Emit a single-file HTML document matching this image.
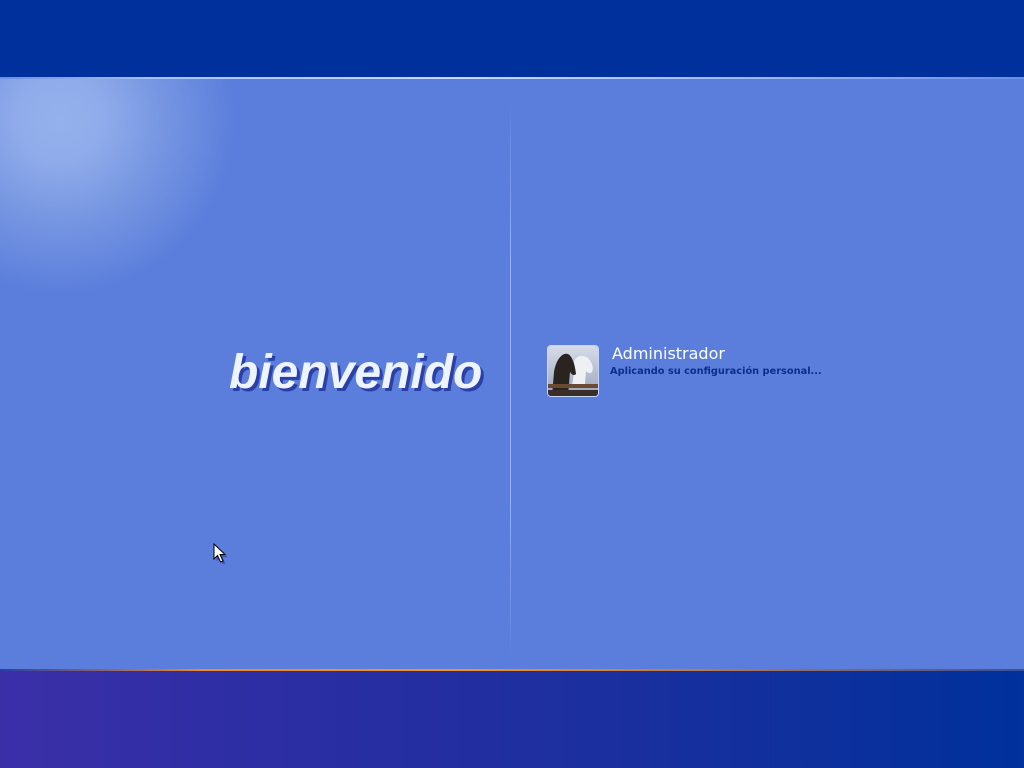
<!DOCTYPE html>
<html><head><meta charset="utf-8"><style>
html,body{margin:0;padding:0;width:1024px;height:768px;overflow:hidden;background:#5b7edc;position:relative;font-family:"Liberation Sans",sans-serif}
.top{position:absolute;left:0;top:0;width:1024px;height:77px;background:#00309c}
.tl{position:absolute;left:0;top:77px;width:1024px;height:2px;background:linear-gradient(90deg,#6a8ee0 0%,#a8c0f4 15%,#c8d8fa 45%,#8aa8ec 85%,#6a8ee0 100%)}
.mid{position:absolute;left:0;top:79px;width:1024px;height:590px;overflow:hidden;background:radial-gradient(circle 175px at 60px 40px,#95b1ec 0%,#8fabea 25%,#7898e2 55%,#5b7edc 100%)}
.div{position:absolute;left:510px;top:100px;width:1px;height:560px;background:linear-gradient(180deg,rgba(150,175,240,0),rgba(160,185,245,0.9) 30%,rgba(160,185,245,0.9) 70%,rgba(150,175,240,0))}
.ol{position:absolute;left:0;top:669px;width:1024px;height:2px;background:linear-gradient(90deg,#2b3da8 0%,#f08a30 20%,#f4922a 45%,#b87850 70%,#3a5098 100%)}
.bot{position:absolute;left:0;top:671px;width:1024px;height:97px;background:linear-gradient(90deg,#3b2fa8 0%,#2a2ea2 30%,#1b2f9e 60%,#00309c 100%)}
.bv{position:absolute;left:229px;top:345px;font-size:48px;font-weight:bold;font-style:italic;color:#eef4ff;text-shadow:3px 3px 0 #2a40a8;}
.av{position:absolute;left:547px;top:345px;width:50px;height:50px;border:1px solid #c8d6f4;border-radius:4px;overflow:hidden}
.name{position:absolute;left:612px;top:344px;font-family:"DejaVu Sans",sans-serif;font-size:16px;color:#fff}
.sub{position:absolute;left:610px;top:366px;font-family:"DejaVu Sans",sans-serif;font-size:9.8px;font-weight:bold;color:#0b2d8c}
</style></head><body>
<div class="top"></div>
<div class="tl"></div>
<div class="mid"></div>
<div class="div"></div>
<div class="ol"></div>
<div class="bot"></div>
<div class="bv">bienvenido</div>
<div class="av"><svg width="50" height="50" viewBox="0 0 50 50">
<defs><linearGradient id="g" x1="0" y1="0" x2="0" y2="1"><stop offset="0" stop-color="#d8dce8"/><stop offset="1" stop-color="#9aa4bc"/></linearGradient></defs>
<rect width="50" height="50" fill="url(#g)"/>
<path d="M26 16 C28 10 34 8 40 12 C44 16 46 22 44 26 C42 28 40 27 38 25 L37 38 L24 40 L26 26 Z" fill="#eef0f4"/>
<path d="M4 50 L6 26 C8 14 14 6 20 8 C24 10 27 18 28 28 C26 30 24 29 22 26 L20 50 Z" fill="#2a2420"/>
<rect x="0" y="38" width="50" height="4" fill="#6a4a30"/>
<rect x="0" y="44" width="50" height="6" fill="#3a2e28"/>
</svg></div>
<div class="name">Administrador</div>
<div class="sub">Aplicando su configuración personal...</div>
<svg style="position:absolute;left:213px;top:543px" width="16" height="22" viewBox="0 0 16 22">
<path d="M2 2 L2 17 L5.5 13.5 L8.5 20 L11 19 L8 12.5 L13 12.5 Z" fill="#203080" opacity="0.5" transform="translate(1.5,1.5)"/>
<path d="M1 1 L1 16 L4.5 12.5 L7.5 19 L10 18 L7 11.5 L12 11.5 Z" fill="#fff" stroke="#000" stroke-width="1"/>
</svg>
</body></html>
